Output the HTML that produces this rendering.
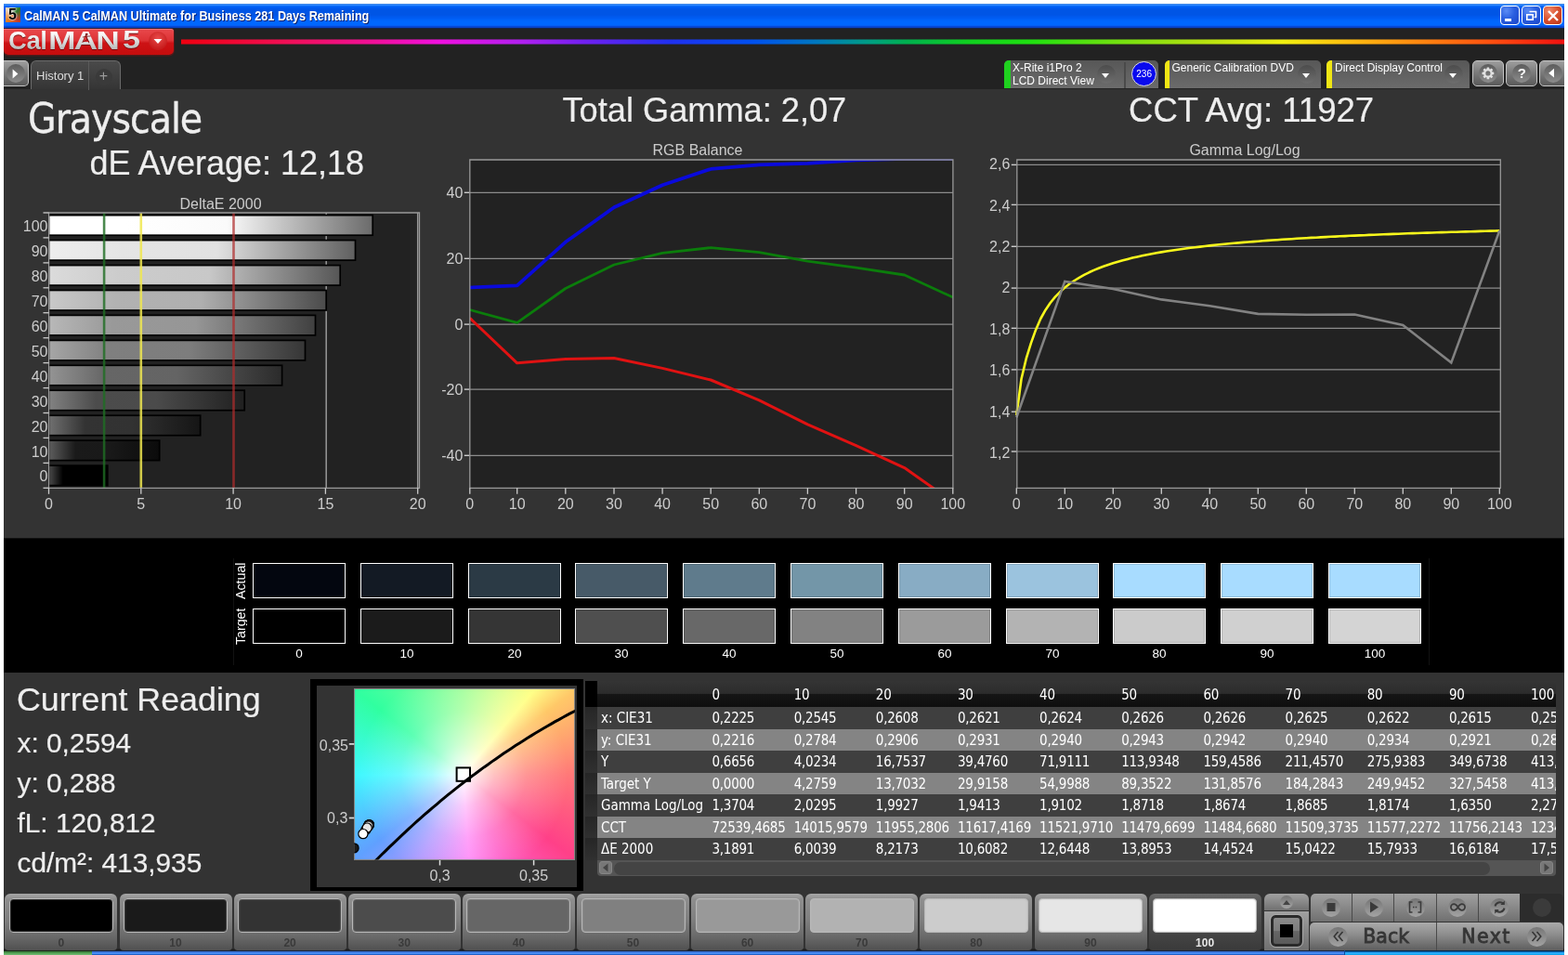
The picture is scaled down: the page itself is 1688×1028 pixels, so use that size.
<!DOCTYPE html>
<html lang="en"><head><meta charset="utf-8"><title>CalMAN 5 CalMAN Ultimate for Business 281 Days Remaining</title>
<style>
*{box-sizing:border-box;margin:0;padding:0}
html,body{width:1688px;height:1028px;overflow:hidden;background:#fff}
body{font-family:"Liberation Sans",sans-serif;position:relative;color:#fff}
.a{position:absolute}
.t{position:absolute;white-space:nowrap;line-height:1}
svg{position:absolute;left:0;top:0;overflow:visible}
#title{left:4px;top:4px;width:1680px;height:27px;background:linear-gradient(to bottom,#3d87e8 .5px,#2e86ff 1.5px,#0c6cf8 2.5px,#0060f5 3.5px,#005af0 4.5px,#0057ea 5.5px,#0055e5 7px,#0055e5 12px,#0058ec 13.5px,#005cf2 15.5px,#0064fa 17.5px,#0067ff 19.5px,#0067ff 22.5px,#0560f4 23.5px,#0448d8 24.5px,#0a44c4 25.5px,#0a44c4 26px,#15244a 26px,#15244a 27px)}
#hdr{left:4px;top:31px;width:1680px;height:65px;background:#222}
#main{left:4px;top:96px;width:1680px;height:483px;background:#333}
#band{left:4px;top:579px;width:1680px;height:145px;background:linear-gradient(to bottom,#101010 0,#101010 1px,#000 1px)}
#low{left:4px;top:724px;width:1680px;height:300px;background:linear-gradient(to bottom,#333 0,#333 297px,#1c1c1c 298px,#1c1c1c 300px)}
#app{left:0;top:0;width:1688px;height:1028px;will-change:transform}
#task{left:4px;top:1023px;width:1680px;height:5px}

#cap{left:25.5px;top:8.5px;font:bold 14px "Liberation Sans",sans-serif;transform:scaleX(.904);transform-origin:0 0;color:#fff;text-shadow:1px 1px 0 #0a1f6b}
.wb{position:absolute;top:6px;width:21px;height:21px;border:1px solid #fff;border-radius:4px;background:radial-gradient(circle at 30% 25%,#5b8cf5 0,#2a5fe0 45%,#1a44c8 100%)}
.wb.x{background:radial-gradient(circle at 30% 25%,#f08a6a 0,#d8502e 50%,#b93214 100%)}
#ico{left:6px;top:8px;width:16px;height:16px;background:conic-gradient(from 45deg,#2a7a2a,#c0392b,#e67e22,#f5d6c0,#2a7a2a);overflow:hidden}
#ico b{position:absolute;left:3px;top:-1px;font:bold 16px "Liberation Sans",sans-serif;color:#000;text-shadow:0 0 2px #fff,0 0 2px #fff}
#logo{left:4px;top:31px;width:182.5px;height:27.5px;border-radius:0 3px 5px 5px;background:linear-gradient(to bottom,#e9494c 0,#dd3235 45%,#cd1215 55%,#c50d0d 100%);box-shadow:inset 0 1px 0 rgba(240,130,130,.75),0 .5px 0 1px rgba(120,20,20,.5)}
#logo .t{font-weight:bold;color:transparent;background:linear-gradient(to bottom,#fff 18%,#e6e6e6 45%,#bdbdbd 82%);-webkit-background-clip:text;background-clip:text;filter:drop-shadow(0 1px .6px rgba(110,10,10,.9));transform-origin:0 0;padding-right:2px}
#logo .lt{left:5px;top:-1.3px;font-size:27.5px;letter-spacing:-.4px}
#logo .lm{left:48.100px;top:-1.3px;font-size:27.500px;letter-spacing:-1.500px;transform:scaleX(1.29)}
#logo .l5{left:127.7px;top:-1.8px;font-size:28px;transform:scaleX(1.22)}
#logo .lc{left:156px;top:2.8px;width:20px;height:20px;border-radius:50%;background:radial-gradient(circle at 50% 35%,#e84a4a,#c81e1e 70%)}
#rain{left:194.5px;top:41.8px;width:1489.5px;height:6.6px;border-radius:0;background:linear-gradient(to bottom,rgba(34,34,34,.75) 0,rgba(34,34,34,0) 22%,rgba(34,34,34,0) 78%,rgba(34,34,34,.75) 100%),linear-gradient(to right,#f00010 0,#f0105a 8%,#f0109a 14%,#f010e0 18.7%,#b020f0 24.7%,#7020f0 29.2%,#2030f0 35.3%,#0050f0 41.3%,#0078c0 45.9%,#00a080 50%,#00b050 52.4%,#10d020 56.9%,#20e010 61.5%,#70e010 67.5%,#b0e010 73.5%,#f0f010 79.6%,#ffc010 84.2%,#ff9010 88.7%,#ff5010 94.7%,#f01010 100%)}
.gbtn{position:absolute;border:1px solid #c4c4c4;border-radius:5px;background:linear-gradient(to bottom,#9e9e9e 0,#7c7c7c 45%,#5a5a5a 100%)}
.gbtn i{position:absolute;border-radius:50%;background:linear-gradient(to bottom,#5c5c5c,#8c8c8c)}
.tab{position:absolute;top:65px;height:31px;border:1px solid #6a6a6a;border-bottom:0;border-radius:6px 6px 0 0;background:linear-gradient(to bottom,#4a4a4a,#353535)}
.dev{position:absolute;top:65px;height:30.3px;border-radius:5px 5px 0 0;background:linear-gradient(to bottom,#575757 0,#6b6b6b 100%);overflow:hidden}
.dev u{position:absolute;left:0;top:0;width:5.5px;height:31px;text-decoration:none}
.dev .n{position:absolute;left:9px;top:1px;font:12px/14px "Liberation Sans",sans-serif;color:#fff;white-space:nowrap}
.dd{position:absolute;top:4.9px;width:20px;height:20px;border-radius:50%;background:linear-gradient(to bottom,#4c4c4c,#6e6e6e)}
.dd:after{content:"";position:absolute;left:5.2px;top:8.8px;border:4.800px solid transparent;border-top:5.300px solid #fff;border-bottom:0}

.h1{font:44px "DejaVu Sans Condensed","DejaVu Sans","Liberation Sans",sans-serif;letter-spacing:-1.05px;color:#eee;-webkit-text-stroke:.3px #eee}
.h2{font-size:36px;color:#eee;-webkit-text-stroke:.2px #eee}
.ct{font-size:16px;color:#ccc}
svg text{font-family:"Liberation Sans",sans-serif;font-size:16px;fill:#ccc}

.sw{position:absolute;width:100px;height:38px;border:1px solid #fff;box-shadow:inset 0 0 0 1px rgba(0,0,0,.13)}
.sl{position:absolute;top:696px;width:100px;text-align:center;font-size:13.5px;line-height:15px;color:#fff}
.rl{position:absolute;font-size:14.2px;line-height:14px;color:#fff;transform:rotate(-90deg);transform-origin:0 0;white-space:nowrap;width:39px;height:14px;overflow:hidden;text-align:center}

.cr{font-size:36px;color:#eee;-webkit-text-stroke:.2px #eee}
.rv{font-size:29.8px;color:#eee;-webkit-text-stroke:.2px #eee}
#cie{left:334px;top:731px;width:294.3px;height:228px;background:#333;border:7px solid #000;border-bottom-width:4px}
#ciebg{left:381.3px;top:741.4px;width:237.8px;height:184.6px;border:1px solid #858585;background:radial-gradient(circle at 49.4% 50.3%,#fff 0,rgba(255,255,255,.9) 5%,rgba(255,255,255,.55) 22%,rgba(255,255,255,.22) 45%,rgba(255,255,255,0) 75%),conic-gradient(from 0deg at 49.4% 50.3%,#a0ff98 0deg,#e4ff90 28deg,#ffff88 40deg,#ffc868 53deg,#ff7878 90deg,#ff4088 127deg,#ff60c8 155deg,#ff88f8 176deg,#b098ff 207deg,#60a0ff 232deg,#40f8ff 270deg,#30ffa0 308deg,#a0ff98 360deg)}
#tbl{left:630px;top:733px;width:1044.5px;height:210px;overflow:hidden;font:15px "DejaVu Sans Condensed","DejaVu Sans","Liberation Sans",sans-serif;letter-spacing:-.25px;color:#fff}
#tbl .r{position:absolute;left:13px;width:1031.5px;height:23.6px;white-space:nowrap}
#tbl .r span{position:absolute;top:3px;line-height:18px}
#tbl .rh{position:absolute;left:0;width:13px;background:linear-gradient(to bottom,#333,#262626)}

.pb{position:absolute;top:962px;width:121px;height:60.6px;border-radius:6px 6px 4px 4px;background:linear-gradient(to bottom,#a6a6a6 0,#8e8e8e 10%,#808080 45%,#6a6a6a 75%,#505050 100%)}
.pb i{position:absolute;left:4.5px;top:5.3px;width:112px;height:36.4px;border:1px solid #b8b8b8;border-radius:4px;box-shadow:inset 0 0 2px rgba(190,190,190,.7)}
.pb b{position:absolute;left:0;top:45.5px;width:121px;text-align:center;font:bold 12px/14px "Liberation Sans",sans-serif;color:#3a3a3a}
.pb.sel{background:linear-gradient(to bottom,#6a6a6a 0,#5a5a5a 12%,#4c4c4c 50%,#3a3a3a 100%)}
.pb.sel b{color:#e6e6e6}
.cb{position:absolute;background:linear-gradient(to bottom,#a0a0a0 0,#888 50%,#707070 100%);border-right:1px solid #4a4a4a}
.cb i{position:absolute;border-radius:50%;background:linear-gradient(to bottom,#747474,#a4a4a4)}
.nav{position:absolute;top:993px;height:29.6px;background:linear-gradient(to bottom,#aaa 0,#8e8e8e 42%,#5e5e5e 100%);font:20.5px "DejaVu Sans","Liberation Sans",sans-serif;color:#353535;-webkit-text-stroke:.8px #353535}
</style></head>
<body>
<div id="app" class="a"><div id="title" class="a"></div><div id="hdr" class="a"></div><div id="main" class="a"></div><div id="band" class="a"></div><div id="low" class="a"></div>
<div id="ico" class="a"><b>5</b></div>
<div id="cap" class="t">CalMAN 5 CalMAN Ultimate for Business 281 Days Remaining</div>
<div class="wb" style="left:1615px"><svg width="21" height="21" viewBox="0 0 21 21"><rect x="4" y="13" width="7" height="3" fill="#fff"/></svg></div>
<div class="wb" style="left:1638px"><svg width="21" height="21" viewBox="0 0 21 21"><path d="M7.5 5.5h7v6h-2" fill="none" stroke="#fff" stroke-width="1.6"/><rect x="4.8" y="8.8" width="6.4" height="5.4" fill="none" stroke="#fff" stroke-width="1.6"/></svg></div>
<div class="wb x" style="left:1661px"><svg width="21" height="21" viewBox="0 0 21 21"><path d="M5 5l10 10M15 5L5 15" stroke="#fff" stroke-width="2.4" fill="none"/></svg></div>
<div id="logo" class="a"><span class="t lt">Cal</span><span class="t lm">MAN</span><span class="t l5">5</span><svg width="183" height="28" style="left:0;top:0"><g transform="translate(-4 -31)" fill="none" stroke="#7e1010" stroke-width=".85" stroke-linecap="round"><circle cx="93.100" cy="36.900" r=".9" fill="#8f1212"/><path d="M93.100 38.600l.7 4.200M89.300 40l3.900-.8 4.100-.3M93.800 42.800l-2.300 1.400-2.700 1M93.800 42.800l1.600 1.300.3 1.900"/></g></svg><div class="a lc"><svg width="20" height="20"><path d="M5.5 8h9L10 13z" fill="#fff"/></svg></div></div>
<div id="rain" class="a"></div>
<div class="gbtn" style="left:4px;top:65px;width:27px;height:28px;border-radius:0 5px 5px 0;border-left:0"><i style="left:3px;top:3px;width:20px;height:20px"></i><svg width="27" height="28"><path d="M9.6 8.4l5.8 5.1-5.8 5.1z" fill="#fff"/></svg></div>
<div class="tab" style="left:33px;width:97px"><span class="t" style="left:5px;top:9px;font-size:13px;color:#ddd">History 1</span><div class="a" style="left:61px;top:0;width:1px;height:31px;background:#5a5a5a"></div><div class="a" style="left:68.5px;top:8px;width:18px;height:18px;border-radius:50%;background:#3a3a3a"></div><span class="t" style="left:72.8px;top:8.3px;font-size:16px;color:#9a9a9a">+</span></div>
<div class="dev" style="left:1081px;width:166px"><u style="background:#1fd11f;width:6.6px"></u><span class="n">X-Rite i1Pro 2<br>LCD Direct View</span><div class="dd" style="left:100px"></div><div class="a" style="left:129px;top:2px;width:2px;height:29px;background:#4a4a4a"></div><div class="a" style="left:137px;top:1px;width:27px;height:27px;border-radius:50%;background:#0a0aee;border:1px solid #ddd"></div><span class="t" style="left:142.3px;top:9.5px;font-size:10px;color:#fff">236</span></div>
<div class="dev" style="left:1253.5px;width:168.5px"><u style="background:#f0e614"></u><span class="n" style="left:8px">Generic Calibration DVD</span><div class="dd" style="left:143px"></div></div>
<div class="dev" style="left:1428px;width:154px"><u style="background:#f0e614"></u><span class="n">Direct Display Control</span><div class="dd" style="left:127px"></div></div>
<div class="gbtn" style="left:1585px;top:65px;width:34px;height:28px"><i style="left:6px;top:3px;width:20px;height:20px"></i><svg width="34" height="28"><g transform="translate(15.900 12.900)" fill="#e2e2e2"><rect x="-1.35" y="-6.4" width="2.7" height="3" rx=".4" transform="rotate(0)"/><rect x="-1.35" y="-6.4" width="2.7" height="3" rx=".4" transform="rotate(45)"/><rect x="-1.35" y="-6.4" width="2.7" height="3" rx=".4" transform="rotate(90)"/><rect x="-1.35" y="-6.4" width="2.7" height="3" rx=".4" transform="rotate(135)"/><rect x="-1.35" y="-6.4" width="2.7" height="3" rx=".4" transform="rotate(180)"/><rect x="-1.35" y="-6.4" width="2.7" height="3" rx=".4" transform="rotate(225)"/><rect x="-1.35" y="-6.4" width="2.7" height="3" rx=".4" transform="rotate(270)"/><rect x="-1.35" y="-6.4" width="2.7" height="3" rx=".4" transform="rotate(315)"/><circle r="3.700" fill="none" stroke="#e2e2e2" stroke-width="2.200"/></g></svg></div>
<div class="gbtn" style="left:1621px;top:65px;width:34px;height:28px"><i style="left:6px;top:3px;width:20px;height:20px"></i><span class="t" style="left:11.700px;top:3.800px;font:bold 15px 'Liberation Sans',sans-serif;color:#fff">?</span></div>
<div class="gbtn" style="left:1657px;top:65px;width:30px;height:28px;border-radius:5px 0 0 5px"><i style="left:3.500px;top:3px;width:20px;height:20px"></i><svg width="30" height="28"><path d="M15 7.800l-5.800 4.900 5.800 4.900z" fill="#fff"/></svg></div>
<div class="t h1" style="left:30px;top:102px">Grayscale</div>
<div class="t h2" style="left:96.500px;top:158px">dE Average: 12,18</div>
<div class="t h2" style="left:605.500px;top:101px;font-size:36.2px">Total Gamma: 2,07</div>
<div class="t h2" style="left:1215px;top:100.500px;font-size:36.550px">CCT Avg: 11927</div>
<svg width="1688" height="1028" viewBox="0 0 1688 1028">
<defs>
<linearGradient id="b0" x1="0" x2="1" y1="0" y2="0"><stop offset="0" stop-color="#4c4c4c"/><stop offset=".24" stop-color="#000000"/><stop offset=".55" stop-color="#000000"/><stop offset="1" stop-color="#000000"/></linearGradient>
<linearGradient id="b10" x1="0" x2="1" y1="0" y2="0"><stop offset="0" stop-color="#5e5e5e"/><stop offset=".24" stop-color="#1a1a1a"/><stop offset=".55" stop-color="#191919"/><stop offset="1" stop-color="#0b0b0b"/></linearGradient>
<linearGradient id="b20" x1="0" x2="1" y1="0" y2="0"><stop offset="0" stop-color="#707070"/><stop offset=".24" stop-color="#333333"/><stop offset=".55" stop-color="#323232"/><stop offset="1" stop-color="#151515"/></linearGradient>
<linearGradient id="b30" x1="0" x2="1" y1="0" y2="0"><stop offset="0" stop-color="#828282"/><stop offset=".24" stop-color="#4c4c4c"/><stop offset=".55" stop-color="#4b4b4b"/><stop offset="1" stop-color="#202020"/></linearGradient>
<linearGradient id="b40" x1="0" x2="1" y1="0" y2="0"><stop offset="0" stop-color="#949494"/><stop offset=".24" stop-color="#666666"/><stop offset=".55" stop-color="#646464"/><stop offset="1" stop-color="#2b2b2b"/></linearGradient>
<linearGradient id="b50" x1="0" x2="1" y1="0" y2="0"><stop offset="0" stop-color="#a6a6a6"/><stop offset=".24" stop-color="#7f7f7f"/><stop offset=".55" stop-color="#7d7d7d"/><stop offset="1" stop-color="#363636"/></linearGradient>
<linearGradient id="b60" x1="0" x2="1" y1="0" y2="0"><stop offset="0" stop-color="#b8b8b8"/><stop offset=".24" stop-color="#999999"/><stop offset=".55" stop-color="#969696"/><stop offset="1" stop-color="#404040"/></linearGradient>
<linearGradient id="b70" x1="0" x2="1" y1="0" y2="0"><stop offset="0" stop-color="#c9c9c9"/><stop offset=".24" stop-color="#b2b2b2"/><stop offset=".55" stop-color="#afafaf"/><stop offset="1" stop-color="#4b4b4b"/></linearGradient>
<linearGradient id="b80" x1="0" x2="1" y1="0" y2="0"><stop offset="0" stop-color="#dbdbdb"/><stop offset=".24" stop-color="#cccccc"/><stop offset=".55" stop-color="#c8c8c8"/><stop offset="1" stop-color="#565656"/></linearGradient>
<linearGradient id="b90" x1="0" x2="1" y1="0" y2="0"><stop offset="0" stop-color="#ededed"/><stop offset=".24" stop-color="#e5e5e5"/><stop offset=".55" stop-color="#e1e1e1"/><stop offset="1" stop-color="#606060"/></linearGradient>
<linearGradient id="b100" x1="0" x2="1" y1="0" y2="0"><stop offset="0" stop-color="#ffffff"/><stop offset=".24" stop-color="#ffffff"/><stop offset=".55" stop-color="#fafafa"/><stop offset="1" stop-color="#6b6b6b"/></linearGradient>
</defs>
<rect x="52.5" y="229.0" width="399.0" height="296.29999999999995" fill="#222"/>
<line x1="351.2" y1="229.0" x2="351.2" y2="525.3" stroke="#999" stroke-width="1.5"/>
<line x1="449.7" y1="229.0" x2="449.7" y2="525.3" stroke="#999" stroke-width="1.5"/>
<rect x="52.5" y="501.1" width="63.3" height="21.5" fill="url(#b0)" stroke="#000" stroke-width="1.7"/>
<rect x="52.5" y="474.1" width="119.2" height="21.5" fill="url(#b10)" stroke="#000" stroke-width="1.7"/>
<rect x="52.5" y="447.2" width="163.2" height="21.5" fill="url(#b20)" stroke="#000" stroke-width="1.7"/>
<rect x="52.5" y="420.2" width="210.7" height="21.5" fill="url(#b30)" stroke="#000" stroke-width="1.7"/>
<rect x="52.5" y="393.3" width="251.1" height="21.5" fill="url(#b40)" stroke="#000" stroke-width="1.7"/>
<rect x="52.5" y="366.4" width="276.0" height="21.5" fill="url(#b50)" stroke="#000" stroke-width="1.7"/>
<rect x="52.5" y="339.4" width="287.0" height="21.5" fill="url(#b60)" stroke="#000" stroke-width="1.7"/>
<rect x="52.5" y="312.5" width="298.7" height="21.5" fill="url(#b70)" stroke="#000" stroke-width="1.7"/>
<rect x="52.5" y="285.6" width="313.7" height="21.5" fill="url(#b80)" stroke="#000" stroke-width="1.7"/>
<rect x="52.5" y="258.6" width="330.0" height="21.5" fill="url(#b90)" stroke="#000" stroke-width="1.7"/>
<rect x="52.5" y="231.7" width="348.7" height="21.5" fill="url(#b100)" stroke="#000" stroke-width="1.7"/>
<line x1="112.1" y1="229.0" x2="112.1" y2="525.3" stroke="#1f6e23" stroke-width="2.6" opacity="0.8"/>
<line x1="151.8" y1="229.0" x2="151.8" y2="525.3" stroke="#f0e850" stroke-width="2.6" opacity="0.85"/>
<line x1="251.5" y1="229.0" x2="251.5" y2="525.3" stroke="#b02c2c" stroke-width="2.6" opacity="0.72"/>
<path d="M52.5 229.0H451.5V525.3H52.5Z" fill="none" stroke="#999" stroke-width="1.3"/>
<line x1="46.5" y1="229.0" x2="52.5" y2="229.0" stroke="#ccc" stroke-width="1.3"/>
<line x1="46.5" y1="255.9" x2="52.5" y2="255.9" stroke="#ccc" stroke-width="1.3"/>
<line x1="46.5" y1="282.9" x2="52.5" y2="282.9" stroke="#ccc" stroke-width="1.3"/>
<line x1="46.5" y1="309.8" x2="52.5" y2="309.8" stroke="#ccc" stroke-width="1.3"/>
<line x1="46.5" y1="336.7" x2="52.5" y2="336.7" stroke="#ccc" stroke-width="1.3"/>
<line x1="46.5" y1="363.7" x2="52.5" y2="363.7" stroke="#ccc" stroke-width="1.3"/>
<line x1="46.5" y1="390.6" x2="52.5" y2="390.6" stroke="#ccc" stroke-width="1.3"/>
<line x1="46.5" y1="417.6" x2="52.5" y2="417.6" stroke="#ccc" stroke-width="1.3"/>
<line x1="46.5" y1="444.5" x2="52.5" y2="444.5" stroke="#ccc" stroke-width="1.3"/>
<line x1="46.5" y1="471.4" x2="52.5" y2="471.4" stroke="#ccc" stroke-width="1.3"/>
<line x1="46.5" y1="498.4" x2="52.5" y2="498.4" stroke="#ccc" stroke-width="1.3"/>
<line x1="46.5" y1="525.3" x2="52.5" y2="525.3" stroke="#ccc" stroke-width="1.3"/>
<line x1="52.5" y1="525.3" x2="52.5" y2="531.8" stroke="#ccc" stroke-width="1.3"/>
<text x="52.5" y="548" text-anchor="middle">0</text>
<line x1="151.8" y1="525.3" x2="151.8" y2="531.8" stroke="#ccc" stroke-width="1.3"/>
<text x="151.8" y="548" text-anchor="middle">5</text>
<line x1="251.1" y1="525.3" x2="251.1" y2="531.8" stroke="#ccc" stroke-width="1.3"/>
<text x="251.1" y="548" text-anchor="middle">10</text>
<line x1="350.4" y1="525.3" x2="350.4" y2="531.8" stroke="#ccc" stroke-width="1.3"/>
<text x="350.4" y="548" text-anchor="middle">15</text>
<line x1="449.7" y1="525.3" x2="449.7" y2="531.8" stroke="#ccc" stroke-width="1.3"/>
<text x="449.7" y="548" text-anchor="middle">20</text>
<text x="51.5" y="518.4" text-anchor="end">0</text>
<text x="51.5" y="491.5" text-anchor="end">10</text>
<text x="51.5" y="464.6" text-anchor="end">20</text>
<text x="51.5" y="437.6" text-anchor="end">30</text>
<text x="51.5" y="410.7" text-anchor="end">40</text>
<text x="51.5" y="383.8" text-anchor="end">50</text>
<text x="51.5" y="356.8" text-anchor="end">60</text>
<text x="51.5" y="329.9" text-anchor="end">70</text>
<text x="51.5" y="302.9" text-anchor="end">80</text>
<text x="51.5" y="276.0" text-anchor="end">90</text>
<text x="51.5" y="249.1" text-anchor="end">100</text>
<text x="237.5" y="225" text-anchor="middle" font-size="16.4">DeltaE 2000</text>
<rect x="505.8" y="172.0" width="520.1000000000001" height="353.29999999999995" fill="#222"/>
<line x1="505.8" y1="207.3" x2="1025.9" y2="207.3" stroke="#8c8c8c" stroke-width="1.2"/>
<line x1="499.8" y1="207.3" x2="505.8" y2="207.3" stroke="#ccc" stroke-width="1.4"/>
<text x="498.3" y="212.9" text-anchor="end">40</text>
<line x1="505.8" y1="278.3" x2="1025.9" y2="278.3" stroke="#8c8c8c" stroke-width="1.2"/>
<line x1="499.8" y1="278.3" x2="505.8" y2="278.3" stroke="#ccc" stroke-width="1.4"/>
<text x="498.3" y="283.9" text-anchor="end">20</text>
<line x1="505.8" y1="349.1" x2="1025.9" y2="349.1" stroke="#8c8c8c" stroke-width="1.2"/>
<line x1="499.8" y1="349.1" x2="505.8" y2="349.1" stroke="#ccc" stroke-width="1.4"/>
<text x="498.3" y="354.7" text-anchor="end">0</text>
<line x1="505.8" y1="419.1" x2="1025.9" y2="419.1" stroke="#8c8c8c" stroke-width="1.2"/>
<line x1="499.8" y1="419.1" x2="505.8" y2="419.1" stroke="#ccc" stroke-width="1.4"/>
<text x="498.3" y="424.7" text-anchor="end">-20</text>
<line x1="505.8" y1="490.3" x2="1025.9" y2="490.3" stroke="#8c8c8c" stroke-width="1.2"/>
<line x1="499.8" y1="490.3" x2="505.8" y2="490.3" stroke="#ccc" stroke-width="1.4"/>
<text x="498.3" y="495.9" text-anchor="end">-40</text>
<clipPath id="rc"><rect x="505.8" y="171.5" width="521.1000000000001" height="354.29999999999995"/></clipPath>
<polyline points="505.8,342.4 556.7,390.8 608.8,386.6 661.0,385.5 713.1,396.4 765.2,409.0 817.3,430.8 869.4,456.8 921.6,479.6 973.7,503.6 1025.8,540.3" fill="none" stroke="#e01212" stroke-width="3.0" stroke-linejoin="round" clip-path="url(#rc)"/>
<polyline points="505.8,333.5 556.7,347.3 608.8,310.5 661.0,285.0 713.1,272.3 765.2,266.6 817.3,271.6 869.4,281.1 921.6,288.2 973.7,296.0 1025.8,320.1" fill="none" stroke="#0b7d0b" stroke-width="2.8" stroke-linejoin="round" clip-path="url(#rc)"/>
<polyline points="505.8,309.5 556.7,307.3 608.8,260.6 661.0,223.3 713.1,199.2 765.2,181.9 817.3,177.3 869.4,175.9 921.6,172.4 973.7,170.9 1025.8,170.9" fill="none" stroke="#0a0adc" stroke-width="3.7" stroke-linejoin="round" clip-path="url(#rc)"/>
<path d="M505.8 172.0H1025.9V525.3H505.8Z" fill="none" stroke="#999" stroke-width="1.3"/>
<line x1="505.8" y1="525.3" x2="505.8" y2="531.8" stroke="#ccc" stroke-width="1.3"/>
<text x="505.8" y="548" text-anchor="middle">0</text>
<line x1="556.7" y1="525.3" x2="556.7" y2="531.8" stroke="#ccc" stroke-width="1.3"/>
<text x="556.7" y="548" text-anchor="middle">10</text>
<line x1="608.8" y1="525.3" x2="608.8" y2="531.8" stroke="#ccc" stroke-width="1.3"/>
<text x="608.8" y="548" text-anchor="middle">20</text>
<line x1="661.0" y1="525.3" x2="661.0" y2="531.8" stroke="#ccc" stroke-width="1.3"/>
<text x="661.0" y="548" text-anchor="middle">30</text>
<line x1="713.1" y1="525.3" x2="713.1" y2="531.8" stroke="#ccc" stroke-width="1.3"/>
<text x="713.1" y="548" text-anchor="middle">40</text>
<line x1="765.2" y1="525.3" x2="765.2" y2="531.8" stroke="#ccc" stroke-width="1.3"/>
<text x="765.2" y="548" text-anchor="middle">50</text>
<line x1="817.3" y1="525.3" x2="817.3" y2="531.8" stroke="#ccc" stroke-width="1.3"/>
<text x="817.3" y="548" text-anchor="middle">60</text>
<line x1="869.4" y1="525.3" x2="869.4" y2="531.8" stroke="#ccc" stroke-width="1.3"/>
<text x="869.4" y="548" text-anchor="middle">70</text>
<line x1="921.6" y1="525.3" x2="921.6" y2="531.8" stroke="#ccc" stroke-width="1.3"/>
<text x="921.6" y="548" text-anchor="middle">80</text>
<line x1="973.7" y1="525.3" x2="973.7" y2="531.8" stroke="#ccc" stroke-width="1.3"/>
<text x="973.7" y="548" text-anchor="middle">90</text>
<line x1="1025.8" y1="525.3" x2="1025.8" y2="531.8" stroke="#ccc" stroke-width="1.3"/>
<text x="1025.8" y="548" text-anchor="middle">100</text>
<text x="751" y="167" text-anchor="middle" font-size="16.4">RGB Balance</text>
<rect x="1094.8" y="172.0" width="520.5" height="353.29999999999995" fill="#222"/>
<line x1="1094.8" y1="177.4" x2="1615.3" y2="177.4" stroke="#8c8c8c" stroke-width="1.2"/>
<line x1="1088.8" y1="177.4" x2="1094.8" y2="177.4" stroke="#ccc" stroke-width="1.4"/>
<text x="1087.3" y="182.1" text-anchor="end">2,6</text>
<line x1="1094.8" y1="220.4" x2="1615.3" y2="220.4" stroke="#8c8c8c" stroke-width="1.2"/>
<line x1="1088.8" y1="220.4" x2="1094.8" y2="220.4" stroke="#ccc" stroke-width="1.4"/>
<text x="1087.3" y="226.5" text-anchor="end">2,4</text>
<line x1="1094.8" y1="265.3" x2="1615.3" y2="265.3" stroke="#8c8c8c" stroke-width="1.2"/>
<line x1="1088.8" y1="265.3" x2="1094.8" y2="265.3" stroke="#ccc" stroke-width="1.4"/>
<text x="1087.3" y="270.9" text-anchor="end">2,2</text>
<line x1="1094.8" y1="310.1" x2="1615.3" y2="310.1" stroke="#8c8c8c" stroke-width="1.2"/>
<line x1="1088.8" y1="310.1" x2="1094.8" y2="310.1" stroke="#ccc" stroke-width="1.4"/>
<text x="1087.3" y="315.3" text-anchor="end">2</text>
<line x1="1094.8" y1="353.3" x2="1615.3" y2="353.3" stroke="#8c8c8c" stroke-width="1.2"/>
<line x1="1088.8" y1="353.3" x2="1094.8" y2="353.3" stroke="#ccc" stroke-width="1.4"/>
<text x="1087.3" y="359.7" text-anchor="end">1,8</text>
<line x1="1094.8" y1="397.9" x2="1615.3" y2="397.9" stroke="#8c8c8c" stroke-width="1.2"/>
<line x1="1088.8" y1="397.9" x2="1094.8" y2="397.9" stroke="#ccc" stroke-width="1.4"/>
<text x="1087.3" y="404.1" text-anchor="end">1,6</text>
<line x1="1094.8" y1="443.2" x2="1615.3" y2="443.2" stroke="#8c8c8c" stroke-width="1.2"/>
<line x1="1088.8" y1="443.2" x2="1094.8" y2="443.2" stroke="#ccc" stroke-width="1.4"/>
<text x="1087.3" y="448.5" text-anchor="end">1,4</text>
<line x1="1094.8" y1="486.0" x2="1615.3" y2="486.0" stroke="#8c8c8c" stroke-width="1.2"/>
<line x1="1088.8" y1="486.0" x2="1094.8" y2="486.0" stroke="#ccc" stroke-width="1.4"/>
<text x="1087.3" y="492.9" text-anchor="end">1,2</text>
<polyline points="1094.3,447.0 1099.5,408.0 1104.7,386.2 1109.9,369.4 1115.1,354.9 1120.3,343.0 1125.5,333.7 1130.7,326.0 1135.9,319.7 1141.1,314.3 1146.3,309.6 1151.5,305.5 1156.7,302.0 1161.9,298.8 1167.1,295.9 1172.3,293.3 1177.5,290.9 1182.7,288.8 1187.9,286.8 1193.1,285.0 1198.3,283.3 1203.5,281.7 1208.7,280.3 1213.9,278.9 1219.1,277.6 1224.3,276.4 1229.5,275.3 1234.7,274.3 1239.9,273.3 1245.1,272.3 1250.3,271.4 1255.5,270.5 1260.7,269.7 1265.9,269.0 1271.1,268.2 1276.3,267.5 1281.5,266.8 1286.7,266.2 1291.9,265.6 1297.1,265.0 1302.3,264.4 1307.5,263.8 1312.7,263.3 1317.9,262.8 1323.1,262.3 1328.3,261.8 1333.5,261.4 1338.7,260.9 1343.9,260.5 1349.1,260.1 1354.3,259.7 1359.5,259.3 1364.7,258.9 1369.9,258.5 1375.1,258.2 1380.3,257.8 1385.5,257.5 1390.7,257.2 1395.9,256.8 1401.1,256.5 1406.3,256.2 1411.5,255.9 1416.7,255.7 1421.9,255.4 1427.1,255.1 1432.3,254.8 1437.5,254.6 1442.7,254.3 1447.9,254.1 1453.1,253.8 1458.3,253.6 1463.5,253.4 1468.7,253.2 1473.9,252.9 1479.1,252.7 1484.3,252.5 1489.5,252.3 1494.7,252.1 1499.9,251.9 1505.1,251.7 1510.3,251.5 1515.5,251.3 1520.7,251.1 1525.9,251.0 1531.1,250.8 1536.3,250.6 1541.5,250.5 1546.7,250.3 1551.9,250.1 1557.1,250.0 1562.3,249.8 1567.5,249.7 1572.7,249.5 1577.9,249.4 1583.1,249.2 1588.3,249.1 1593.5,248.9 1598.7,248.8 1603.9,248.6 1609.1,248.5 1614.3,248.4" fill="none" stroke="#f8f81c" stroke-width="2.6" stroke-linejoin="round"/>
<polyline points="1094.3,449.2 1146.3,302.9 1198.3,311.0 1250.3,322.4 1302.3,329.3 1354.3,337.9 1406.3,338.8 1458.3,338.6 1510.3,349.9 1562.3,390.4 1614.3,248.3" fill="none" stroke="#828282" stroke-width="2.6" stroke-linejoin="miter"/>
<path d="M1094.8 172.0H1615.3V525.3H1094.8Z" fill="none" stroke="#999" stroke-width="1.3"/>
<line x1="1094.3" y1="525.3" x2="1094.3" y2="531.8" stroke="#ccc" stroke-width="1.3"/>
<text x="1094.3" y="548" text-anchor="middle">0</text>
<line x1="1146.3" y1="525.3" x2="1146.3" y2="531.8" stroke="#ccc" stroke-width="1.3"/>
<text x="1146.3" y="548" text-anchor="middle">10</text>
<line x1="1198.3" y1="525.3" x2="1198.3" y2="531.8" stroke="#ccc" stroke-width="1.3"/>
<text x="1198.3" y="548" text-anchor="middle">20</text>
<line x1="1250.3" y1="525.3" x2="1250.3" y2="531.8" stroke="#ccc" stroke-width="1.3"/>
<text x="1250.3" y="548" text-anchor="middle">30</text>
<line x1="1302.3" y1="525.3" x2="1302.3" y2="531.8" stroke="#ccc" stroke-width="1.3"/>
<text x="1302.3" y="548" text-anchor="middle">40</text>
<line x1="1354.3" y1="525.3" x2="1354.3" y2="531.8" stroke="#ccc" stroke-width="1.3"/>
<text x="1354.3" y="548" text-anchor="middle">50</text>
<line x1="1406.3" y1="525.3" x2="1406.3" y2="531.8" stroke="#ccc" stroke-width="1.3"/>
<text x="1406.3" y="548" text-anchor="middle">60</text>
<line x1="1458.3" y1="525.3" x2="1458.3" y2="531.8" stroke="#ccc" stroke-width="1.3"/>
<text x="1458.3" y="548" text-anchor="middle">70</text>
<line x1="1510.3" y1="525.3" x2="1510.3" y2="531.8" stroke="#ccc" stroke-width="1.3"/>
<text x="1510.3" y="548" text-anchor="middle">80</text>
<line x1="1562.3" y1="525.3" x2="1562.3" y2="531.8" stroke="#ccc" stroke-width="1.3"/>
<text x="1562.3" y="548" text-anchor="middle">90</text>
<line x1="1614.3" y1="525.3" x2="1614.3" y2="531.8" stroke="#ccc" stroke-width="1.3"/>
<text x="1614.3" y="548" text-anchor="middle">100</text>
<text x="1340" y="167" text-anchor="middle" font-size="16.4">Gamma Log/Log</text>
</svg>
<div class="a" style="left:251px;top:601px;width:1px;height:115px;background:#121212"></div>
<div class="a" style="left:1538px;top:601px;width:1px;height:115px;background:#121212"></div>
<div class="rl" style="left:252px;top:645px">Actual</div>
<div class="rl" style="left:252px;top:694px">Target</div>
<div class="sw" style="left:272px;top:606px;background:#03060f"></div><div class="sw" style="left:272px;top:655px;background:#000000"></div><div class="sl" style="left:272px">0</div>
<div class="sw" style="left:388px;top:606px;background:#131a24"></div><div class="sw" style="left:388px;top:655px;background:#1b1b1b"></div><div class="sl" style="left:388px">10</div>
<div class="sw" style="left:504px;top:606px;background:#2b3a45"></div><div class="sw" style="left:504px;top:655px;background:#353535"></div><div class="sl" style="left:504px">20</div>
<div class="sw" style="left:619px;top:606px;background:#475a68"></div><div class="sw" style="left:619px;top:655px;background:#4f4f4f"></div><div class="sl" style="left:619px">30</div>
<div class="sw" style="left:735px;top:606px;background:#5f7b8c"></div><div class="sw" style="left:735px;top:655px;background:#686868"></div><div class="sl" style="left:735px">40</div>
<div class="sw" style="left:851px;top:606px;background:#7396a8"></div><div class="sw" style="left:851px;top:655px;background:#828282"></div><div class="sl" style="left:851px">50</div>
<div class="sw" style="left:967px;top:606px;background:#88acc4"></div><div class="sw" style="left:967px;top:655px;background:#9b9b9b"></div><div class="sl" style="left:967px">60</div>
<div class="sw" style="left:1083px;top:606px;background:#9bc3de"></div><div class="sw" style="left:1083px;top:655px;background:#b3b3b3"></div><div class="sl" style="left:1083px">70</div>
<div class="sw" style="left:1198px;top:606px;background:#a8dcff"></div><div class="sw" style="left:1198px;top:655px;background:#cbcbcb"></div><div class="sl" style="left:1198px">80</div>
<div class="sw" style="left:1314px;top:606px;background:#a8dcff"></div><div class="sw" style="left:1314px;top:655px;background:#d0d0d0"></div><div class="sl" style="left:1314px">90</div>
<div class="sw" style="left:1430px;top:606px;background:#a8dcff"></div><div class="sw" style="left:1430px;top:655px;background:#d4d4d4"></div><div class="sl" style="left:1430px">100</div>
<div class="t cr" style="left:18px;top:736px;font-size:35.800px">Current Reading</div>
<div class="t rv" style="left:18.500px;top:785px">x: 0,2594</div>
<div class="t rv" style="left:18.500px;top:828px">y: 0,288</div>
<div class="t rv" style="left:18.500px;top:871.4px">fL: 120,812</div>
<div class="t rv" style="left:18.500px;top:914px">cd/m²: 413,935</div>
<div id="cie" class="a"></div><div id="ciebg" class="a"></div>
<svg width="1688" height="1028" viewBox="0 0 1688 1028">
<clipPath id="cc"><rect x="381.3" y="741.4" width="237.6" height="184"/></clipPath>
<rect x="491.6" y="826.4" width="14.4" height="14.4" fill="rgba(255,255,255,.55)" stroke="#000" stroke-width="2"/>
<g clip-path="url(#cc)">
<polyline points="372.4,960.2 376.6,955.5 380.9,950.9 385.1,946.4 389.4,941.9 393.6,937.5 397.9,933.1 402.1,928.8 406.4,924.5 410.6,920.3 414.9,916.1 419.1,911.9 423.4,907.8 427.6,903.8 431.8,899.8 436.1,895.8 440.3,891.9 444.6,888.0 448.8,884.2 453.1,880.4 457.3,876.7 461.6,873.0 465.8,869.4 470.1,865.8 474.3,862.2 478.6,858.7 482.8,855.2 487.0,851.8 491.3,848.4 495.5,845.1 499.8,841.8 504.0,838.5 508.3,835.3 512.5,832.2 516.8,829.0 521.0,825.9 525.3,822.9 529.5,819.9 533.8,816.9 538.0,814.0 542.2,811.1 546.5,808.2 550.7,805.4 555.0,802.6 559.2,799.9 563.5,797.2 567.7,794.5 572.0,791.9 576.2,789.3 580.5,786.8 584.7,784.3 589.0,781.8 593.2,779.4 597.4,776.9 601.7,774.6 605.9,772.2 610.2,769.9 614.4,767.7 618.7,765.5 622.9,763.3 627.2,761.1" fill="none" stroke="#000" stroke-width="3"/>
<circle cx="316.3" cy="1003.3" r="5.1" fill="#000000" stroke="#000" stroke-width="1.2"/>
<circle cx="381.0" cy="912.9" r="5.1" fill="#1a1a1a" stroke="#000" stroke-width="1.2"/>
<circle cx="393.7" cy="893.5" r="5.1" fill="#333333" stroke="#000" stroke-width="1.2"/>
<circle cx="396.4" cy="889.5" r="5.1" fill="#4c4c4c" stroke="#000" stroke-width="1.2"/>
<circle cx="397.0" cy="888.1" r="5.1" fill="#666666" stroke="#000" stroke-width="1.2"/>
<circle cx="397.4" cy="887.6" r="5.1" fill="#808080" stroke="#000" stroke-width="1.2"/>
<circle cx="397.4" cy="887.7" r="5.1" fill="#999999" stroke="#000" stroke-width="1.2"/>
<circle cx="397.2" cy="888.1" r="5.1" fill="#b2b2b2" stroke="#000" stroke-width="1.2"/>
<circle cx="396.6" cy="889.0" r="5.1" fill="#cccccc" stroke="#000" stroke-width="1.2"/>
<circle cx="395.2" cy="891.1" r="5.1" fill="#e6e6e6" stroke="#000" stroke-width="1.2"/>
<circle cx="390.9" cy="897.6" r="5.1" fill="#ffffff" stroke="#000" stroke-width="1.2"/>
</g>
<line x1="473.5" y1="926" x2="473.5" y2="931.5" stroke="#ddd" stroke-width="1.5"/>
<text x="473.5" y="948" text-anchor="middle">0,3</text>
<line x1="375.800" y1="880.5" x2="381.300" y2="880.5" stroke="#ddd" stroke-width="1.700"/>
<text x="374.3" y="886.4" text-anchor="end">0,3</text>
<line x1="574.6" y1="926" x2="574.6" y2="931.5" stroke="#ddd" stroke-width="1.5"/>
<text x="574.6" y="948" text-anchor="middle">0,35</text>
<line x1="375.800" y1="800.9" x2="381.300" y2="800.9" stroke="#ddd" stroke-width="1.700"/>
<text x="375" y="807.6" text-anchor="end">0,35</text>
</svg>
<div id="tbl" class="a">
<div class="rh" style="top:0;height:27.7px;background:#000"></div>
<div class="rh" style="top:27.7px;height:165px;background:repeating-linear-gradient(to bottom,#262626 0,#303030 23.55px)"></div>
<div class="r" style="top:0px;height:27.7px;background:linear-gradient(to bottom,#343434 0,#2c2c2c 48%,#151515 52%,#0e0e0e 100%)"><span style="left:123.5px;top:5.6px">0</span><span style="left:211.7px;top:5.6px">10</span><span style="left:299.8px;top:5.6px">20</span><span style="left:388.0px;top:5.6px">30</span><span style="left:476.1px;top:5.6px">40</span><span style="left:564.2px;top:5.6px">50</span><span style="left:652.4px;top:5.6px">60</span><span style="left:740.6px;top:5.6px">70</span><span style="left:828.7px;top:5.6px">80</span><span style="left:916.9px;top:5.6px">90</span><span style="left:1005.0px;top:5.6px">100</span></div>
<div class="r" style="top:27.7px;height:24.3px;background:#3f3f3f"><span style="left:4px;top:3.0px;letter-spacing:-.02px">x: CIE31</span><span style="left:123.5px;top:3.0px">0,2225</span><span style="left:211.7px;top:3.0px">0,2545</span><span style="left:299.8px;top:3.0px">0,2608</span><span style="left:388.0px;top:3.0px">0,2621</span><span style="left:476.1px;top:3.0px">0,2624</span><span style="left:564.2px;top:3.0px">0,2626</span><span style="left:652.4px;top:3.0px">0,2626</span><span style="left:740.6px;top:3.0px">0,2625</span><span style="left:828.7px;top:3.0px">0,2622</span><span style="left:916.9px;top:3.0px">0,2615</span><span style="left:1005.0px;top:3.0px">0,25</span></div>
<div class="r" style="top:52.0px;height:23.2px;background:#848484"><span style="left:4px;top:3.0px;letter-spacing:-.02px">y: CIE31</span><span style="left:123.5px;top:3.0px">0,2216</span><span style="left:211.7px;top:3.0px">0,2784</span><span style="left:299.8px;top:3.0px">0,2906</span><span style="left:388.0px;top:3.0px">0,2931</span><span style="left:476.1px;top:3.0px">0,2940</span><span style="left:564.2px;top:3.0px">0,2943</span><span style="left:652.4px;top:3.0px">0,2942</span><span style="left:740.6px;top:3.0px">0,2940</span><span style="left:828.7px;top:3.0px">0,2934</span><span style="left:916.9px;top:3.0px">0,2921</span><span style="left:1005.0px;top:3.0px">0,28</span></div>
<div class="r" style="top:75.2px;height:23.5px;background:#3f3f3f"><span style="left:4px;top:3.0px;letter-spacing:-.02px">Y</span><span style="left:123.5px;top:3.0px">0,6656</span><span style="left:211.7px;top:3.0px">4,0234</span><span style="left:299.8px;top:3.0px">16,7537</span><span style="left:388.0px;top:3.0px">39,4760</span><span style="left:476.1px;top:3.0px">71,9111</span><span style="left:564.2px;top:3.0px">113,9348</span><span style="left:652.4px;top:3.0px">159,4586</span><span style="left:740.6px;top:3.0px">211,4570</span><span style="left:828.7px;top:3.0px">275,9383</span><span style="left:916.9px;top:3.0px">349,6738</span><span style="left:1005.0px;top:3.0px">413,</span></div>
<div class="r" style="top:98.7px;height:23.3px;background:#848484"><span style="left:4px;top:3.0px;letter-spacing:-.02px">Target Y</span><span style="left:123.5px;top:3.0px">0,0000</span><span style="left:211.7px;top:3.0px">4,2759</span><span style="left:299.8px;top:3.0px">13,7032</span><span style="left:388.0px;top:3.0px">29,9158</span><span style="left:476.1px;top:3.0px">54,9988</span><span style="left:564.2px;top:3.0px">89,3522</span><span style="left:652.4px;top:3.0px">131,8576</span><span style="left:740.6px;top:3.0px">184,2843</span><span style="left:828.7px;top:3.0px">249,9452</span><span style="left:916.9px;top:3.0px">327,5458</span><span style="left:1005.0px;top:3.0px">413,</span></div>
<div class="r" style="top:122.0px;height:23.7px;background:#3f3f3f"><span style="left:4px;top:3.0px;letter-spacing:-.02px">Gamma Log/Log</span><span style="left:123.5px;top:3.0px">1,3704</span><span style="left:211.7px;top:3.0px">2,0295</span><span style="left:299.8px;top:3.0px">1,9927</span><span style="left:388.0px;top:3.0px">1,9413</span><span style="left:476.1px;top:3.0px">1,9102</span><span style="left:564.2px;top:3.0px">1,8718</span><span style="left:652.4px;top:3.0px">1,8674</span><span style="left:740.6px;top:3.0px">1,8685</span><span style="left:828.7px;top:3.0px">1,8174</span><span style="left:916.9px;top:3.0px">1,6350</span><span style="left:1005.0px;top:3.0px">2,27</span></div>
<div class="r" style="top:145.7px;height:23.3px;background:#848484"><span style="left:4px;top:3.0px;letter-spacing:-.02px">CCT</span><span style="left:123.5px;top:3.0px">72539,4685</span><span style="left:211.7px;top:3.0px">14015,9579</span><span style="left:299.8px;top:3.0px">11955,2806</span><span style="left:388.0px;top:3.0px">11617,4169</span><span style="left:476.1px;top:3.0px">11521,9710</span><span style="left:564.2px;top:3.0px">11479,6699</span><span style="left:652.4px;top:3.0px">11484,6680</span><span style="left:740.6px;top:3.0px">11509,3735</span><span style="left:828.7px;top:3.0px">11577,2272</span><span style="left:916.9px;top:3.0px">11756,2143</span><span style="left:1005.0px;top:3.0px">1234</span></div>
<div class="r" style="top:169.0px;height:23.5px;background:#3f3f3f"><span style="left:4px;top:3.0px;letter-spacing:-.02px">ΔE 2000</span><span style="left:123.5px;top:3.0px">3,1891</span><span style="left:211.7px;top:3.0px">6,0039</span><span style="left:299.8px;top:3.0px">8,2173</span><span style="left:388.0px;top:3.0px">10,6082</span><span style="left:476.1px;top:3.0px">12,6448</span><span style="left:564.2px;top:3.0px">13,8953</span><span style="left:652.4px;top:3.0px">14,4524</span><span style="left:740.6px;top:3.0px">15,0422</span><span style="left:828.7px;top:3.0px">15,7933</span><span style="left:916.9px;top:3.0px">16,6184</span><span style="left:1005.0px;top:3.0px">17,5</span></div>
<div class="a" style="left:13px;top:192.5px;width:1031.5px;height:17.5px;background:#555;border-radius:0 0 4px 4px"></div>
<div class="a" style="left:31px;top:194.5px;width:943px;height:14px;background:#444;border-radius:7px"></div>
<div class="a" style="left:15px;top:194px;width:14px;height:14px;background:#777;border:1px solid #858585;border-radius:3px"><svg width="12" height="12"><path d="M8.5 1.5v9L3 6z" fill="#444"/></svg></div>
<div class="a" style="left:1027.5px;top:194px;width:14px;height:14px;background:#777;border:1px solid #858585;border-radius:3px"><svg width="12" height="12"><path d="M3.5 1.5v9L9 6z" fill="#444"/></svg></div>
</div>
<div class="pb" style="left:5.4px"><i style="background:#000000"></i><b>0</b></div>
<div class="pb" style="left:128.5px"><i style="background:#1a1a1a"></i><b>10</b></div>
<div class="pb" style="left:251.6px"><i style="background:#333333"></i><b>20</b></div>
<div class="pb" style="left:374.8px"><i style="background:#4c4c4c"></i><b>30</b></div>
<div class="pb" style="left:497.9px"><i style="background:#666666"></i><b>40</b></div>
<div class="pb" style="left:621.0px"><i style="background:#808080"></i><b>50</b></div>
<div class="pb" style="left:744.1px"><i style="background:#999999"></i><b>60</b></div>
<div class="pb" style="left:867.2px"><i style="background:#b2b2b2"></i><b>70</b></div>
<div class="pb" style="left:990.4px"><i style="background:#cccccc"></i><b>80</b></div>
<div class="pb" style="left:1113.5px"><i style="background:#e6e6e6"></i><b>90</b></div>
<div class="pb sel" style="left:1236.6px"><i style="background:#ffffff"></i><b>100</b></div>
<div class="cb" style="left:1361px;top:962px;width:48px;height:18px;border-radius:6px 6px 0 0;border-right:0"><i style="left:17px;top:2px;width:14px;height:14px"></i><svg width="48" height="18"><path d="M20 12l4-5 4 5z" fill="#444"/></svg></div>
<div class="cb" style="left:1361px;top:981px;width:48px;height:41.6px;border-right:0"><div class="a" style="left:7px;top:4px;width:34px;height:34px;border:3px solid #2a2a2a;border-radius:5px;outline:1px solid #aaa;outline-offset:0;background:linear-gradient(to bottom,#8a8a8a 0,#7c7c7c 50%,#666 52%,#5a5a5a 100%)"></div><div class="a" style="left:17px;top:14px;width:14px;height:14px;background:#000"></div></div>
<div class="cb" style="left:1410.8px;top:962px;width:45.3px;height:30px;border-radius:5px 0 0 0;"><i style="left:12.500px;top:4.500px;width:20px;height:20px"></i><svg width="45" height="30"><rect x="17.5" y="10" width="9" height="9" fill="#3a3a3a"/></svg></div>
<div class="cb" style="left:1456.0px;top:962px;width:45.3px;height:30px;"><i style="left:12.500px;top:4.500px;width:20px;height:20px"></i><svg width="45" height="30"><path d="M19 8.5l9 6-9 6z" fill="#3a3a3a"/></svg></div>
<div class="cb" style="left:1501.3px;top:962px;width:45.3px;height:30px;"><i style="left:12.500px;top:4.500px;width:20px;height:20px"></i><svg width="45" height="30"><path d="M19.5 9h-3v11h3M25.5 9h3v11h-3" fill="none" stroke="#3a3a3a" stroke-width="1.6"/><path d="M20 14.5h5" stroke="#3a3a3a" stroke-width="1.6" stroke-dasharray="1.5 1.2"/></svg></div>
<div class="cb" style="left:1546.5px;top:962px;width:45.3px;height:30px;"><i style="left:12.500px;top:4.500px;width:20px;height:20px"></i><svg width="45" height="30"><path d="M22.5 14.5c-1.5-2.5-3-3.3-4.3-3.3a3.3 3.3 0 0 0 0 6.6c1.300 0 2.800-.8 4.300-3.300zm0 0c1.500 2.500 3 3.300 4.300 3.300a3.300 3.300 0 0 0 0-6.600c-1.300 0-2.800.8-4.300 3.300z" fill="none" stroke="#3a3a3a" stroke-width="1.7"/></svg></div>
<div class="cb" style="left:1591.8px;top:962px;width:45.3px;height:30px;"><i style="left:12.500px;top:4.500px;width:20px;height:20px"></i><svg width="45" height="30"><path d="M17.500 13.500a5.200 5.200 0 0 1 9-2.500M27.500 15.500a5.200 5.200 0 0 1-9 2.500" fill="none" stroke="#3a3a3a" stroke-width="2"/><path d="M27.800 7.500v4.500h-4.500zM17.200 21.500v-4.500h4.500z" fill="#3a3a3a"/></svg></div>
<div class="a" style="left:1636px;top:962px;width:47px;height:30px;background:#2c2c2c;border-radius:0 5px 0 0"><div class="a" style="left:14px;top:5px;width:20px;height:20px;border-radius:50%;background:#3b3b3b"></div></div>
<div class="nav" style="left:1410px;width:136.500px;border-radius:5px 0 0 0;border-right:1px solid #4a4a4a"><div class="a" style="left:20px;top:4.5px;width:21px;height:21px;border-radius:50%;background:linear-gradient(to bottom,#767676,#a2a2a2)"></div><svg width="137" height="30" style="left:0;top:0"><path d="M30.5 10l-4.300 5 4.300 5M35.500 10l-4.300 5 4.300 5" fill="none" stroke="#333" stroke-width="1.500"/></svg><span class="t" style="left:57.3px;top:5px">Back</span></div>
<div class="nav" style="left:1547px;width:136px;border-radius:0 5px 0 0"><span class="t" style="left:26.3px;top:5px;letter-spacing:1.4px">Next</span><div class="a" style="left:96.5px;top:4.5px;width:21px;height:21px;border-radius:50%;background:linear-gradient(to bottom,#767676,#a2a2a2)"></div><svg width="137" height="30" style="left:0;top:0"><path d="M102.500 10l4.300 5-4.300 5M107.500 10l4.300 5-4.300 5" fill="none" stroke="#333" stroke-width="1.500"/></svg></div>
<div class="a" style="left:0;top:0;width:4px;height:1028px;background:#fff"></div><div class="a" style="left:1684px;top:0;width:4px;height:1028px;background:#fff"></div><div class="a" style="left:0;top:0;width:1688px;height:4px;background:#fff"></div>
<div id="task" class="a" style="background:linear-gradient(to bottom,#15243f 0px,#15243f 1px,#3a6ecb 1px,#3a6ecb 2px,#3f80e8 2px,#3f80e8 3px,#4990f8 3px,#4990f8 4px,#1c60c8 4px,#1c60c8 5px)"><div class="a" style="left:0;top:0;width:94.5px;height:5px;background:linear-gradient(to bottom,#1a2b19 0px,#1a2b19 1px,#3f7d40 1px,#3f7d40 2px,#48964a 2px,#48964a 3px,#5eaa5f 3px,#5eaa5f 4px,#6bb56d 4px,#6bb56d 5px)"></div><div class="a" style="left:1443px;top:0;width:1px;height:5px;background:#0a4a9a"></div><div class="a" style="left:1444px;top:0;width:236px;height:5px;background:linear-gradient(to bottom,#06294a 0px,#06294a 1px,#0a5fa9 1px,#0a5fa9 2px,#22a0f0 2px,#22a0f0 3px,#28b0ff 3px,#28b0ff 4px,#12a4ec 4px,#12a4ec 5px)"></div></div>
</div>
</body></html>
